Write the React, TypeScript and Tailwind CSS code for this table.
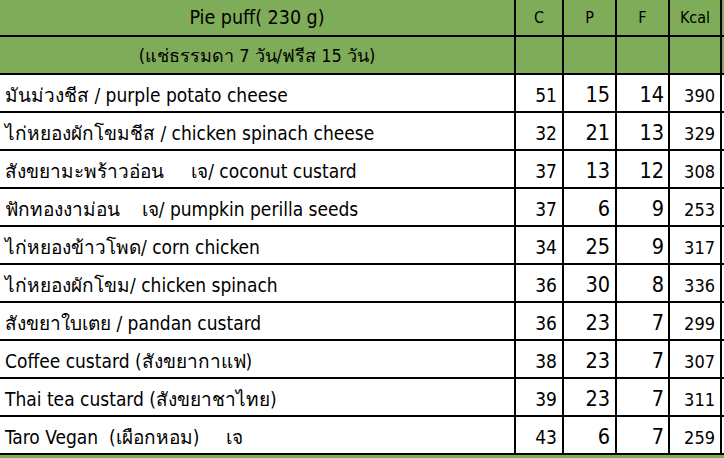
import React from "react";

const rows: [string, number, number, number, number][] = [
  ["มันม่วงชีส / purple potato cheese", 51, 15, 14, 390],
  ["ไก่หยองผักโขมชีส / chicken spinach cheese", 32, 21, 13, 329],
  ["สังขยามะพร้าวอ่อน     เจ/ coconut custard", 37, 13, 12, 308],
  ["ฟักทองงาม่อน    เจ/ pumpkin perilla seeds", 37, 6, 9, 253],
  ["ไก่หยองข้าวโพด/ corn chicken", 34, 25, 9, 317],
  ["ไก่หยองผักโขม/ chicken spinach", 36, 30, 8, 336],
  ["สังขยาใบเตย / pandan custard", 36, 23, 7, 299],
  ["Coffee custard (สังขยากาแฟ)", 38, 23, 7, 307],
  ["Thai tea custard (สังขยาชาไทย)", 39, 23, 7, 311],
  ["Taro Vegan  (เผือกหอม)     เจ", 43, 6, 7, 259],
];

const cell = "border-r-2 border-b-2 border-black flex";
const data = `${cell} h-[38px] items-end leading-none pb-[6px]`;
const head = `${cell} h-[37px] bg-[#7fac58] items-center justify-center`;

export default function App() {
  return (
    <div
      className="w-[724px] h-[458px] overflow-hidden bg-white text-black"
      style={{ fontFamily: '"DejaVu Sans Condensed", "DejaVu Sans", Tahoma, sans-serif' }}
    >
      <div className="grid grid-cols-[516px_48px_53px_53px_52px_2px]">
        {/* header row 1 */}
        <div className={`${head} text-[19.5px]`}>Pie puff( 230 g)</div>
        <div className={`${head} text-[16px]`}>C</div>
        <div className={`${head} text-[16px]`}>P</div>
        <div className={`${head} text-[16px]`}>F</div>
        <div className={`${head} text-[16px]`}>Kcal</div>
        <div className="h-[37px] bg-[#7fac58] border-b-2 border-black" />
        {/* header row 2 */}
        <div className={`${cell} h-[38px] bg-[#7fac58] items-center justify-center text-[18px] whitespace-pre`}>(แช่ธรรมดา 7 วัน/ฟรีส 15 วัน)</div>
        <div className={`${cell} h-[38px] bg-[#7fac58]`} />
        <div className={`${cell} h-[38px] bg-[#7fac58]`} />
        <div className={`${cell} h-[38px] bg-[#7fac58]`} />
        <div className={`${cell} h-[38px] bg-[#7fac58]`} />
        <div className="h-[38px] bg-[#7fac58] border-b-2 border-black" />
        {rows.map(([name, c, p, f, k]) => (
          <React.Fragment key={name}>
            <div className={`${data} pl-[5px] text-[19px] whitespace-pre`}>{name}</div>
            <div className={`${data} justify-end pr-[5px] text-[19px]`}>{c}</div>
            <div className={`${data} justify-end pr-[5px] text-[21.5px]`}>{p}</div>
            <div className={`${data} justify-end pr-[4px] text-[21.5px]`}>{f}</div>
            <div className={`${data} justify-end pr-[5px] text-[18px]`}>{k}</div>
            <div className="h-[38px] border-b-2 border-black" />
          </React.Fragment>
        ))}
        <div className="col-span-6 h-[10px] bg-[#7fac58]" />
      </div>
    </div>
  );
}
